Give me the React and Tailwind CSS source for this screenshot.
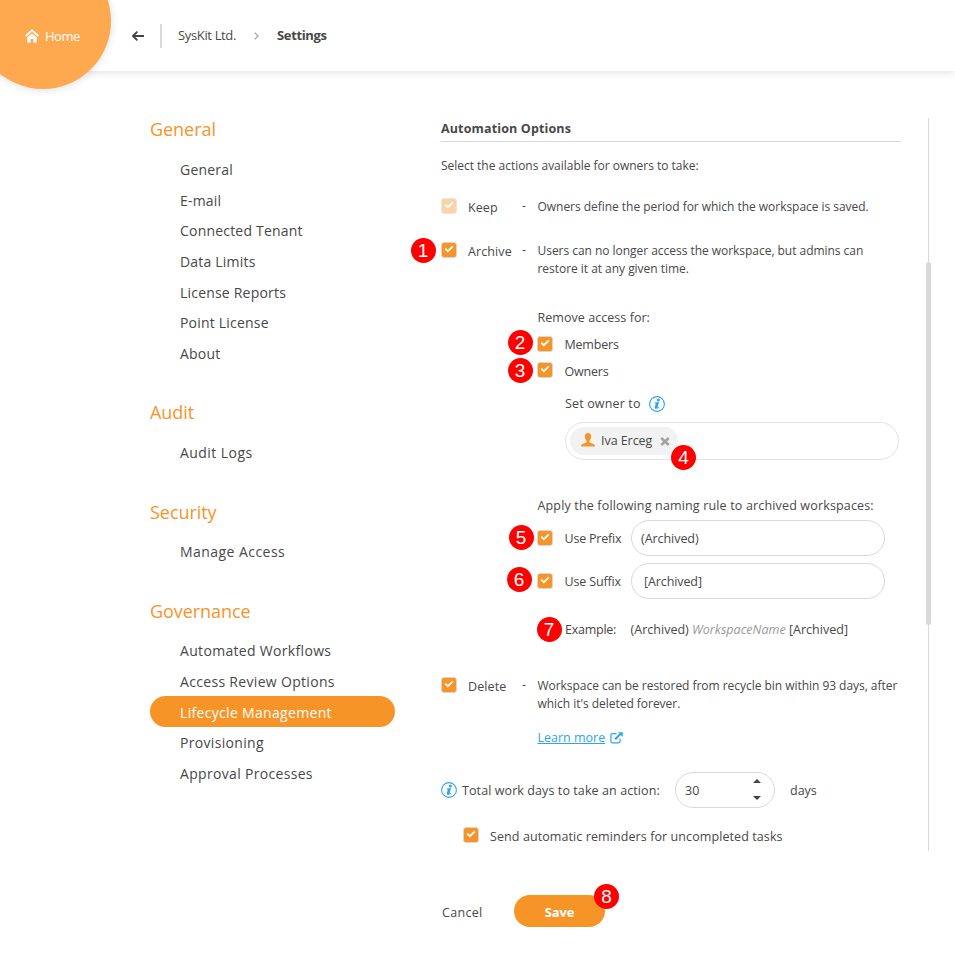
import React from 'react';

function Checkbox({ disabled = false }) {
  return (
    <span
      className={`flex h-4 w-4 shrink-0 items-center justify-center rounded-[3px] border ${
        disabled ? 'border-[#ece6e0] bg-[#fcd3a6]' : 'border-[#dcd5cc] bg-[#f79428]'
      }`}
    >
      <svg className="-mt-[2px]" width="10" height="8" viewBox="0 0 10 8" fill="none" stroke="#fff" strokeWidth="1.8">
        <path d="M1.200 3.600 3.900 6.200 8.800 1.400" />
      </svg>
    </span>
  );
}

function Badge({ n, className }) {
  return (
    <span
      className={`absolute flex h-[25px] w-[25px] items-center justify-center rounded-full bg-[#fe0000] font-['Liberation_Sans',sans-serif] text-[19px] leading-none tracking-normal text-white ${className}`}
    >
      {n}
    </span>
  );
}

function InfoIcon() {
  return (
    <svg className="shrink-0" width="16" height="16" viewBox="0 0 16 16">
      <circle cx="8" cy="8" r="7.4" fill="none" stroke="#2ea3f2" strokeWidth="1.1" />
      <circle cx="9.4" cy="4" r="1.5" fill="#2ea3f2" />
      <path d="M5.500 6.500 10 5.900 8.600 11.200c-.1.500.3.400 1.100-.4l.4.400c-1.800 2.200-5.100 2.200-4.300-.3L6.800 7.500 5.500 7.300Z" fill="#2ea3f2" />
    </svg>
  );
}

const sections = [
  {
    title: 'General',
    heading: 'mb-[10.7px]',
    text: 'tracking-[0.2px]',
    items: ['General', 'E-mail', 'Connected Tenant', 'Data Limits', 'License Reports', 'Point License', 'About'],
  },
  { title: 'Audit', heading: 'mb-[10.7px]', text: 'tracking-[0.45px]', items: ['Audit Logs'] },
  { title: 'Security', heading: 'mb-[10px]', text: 'tracking-[0.45px]', items: ['Manage Access'] },
  {
    title: 'Governance',
    heading: 'mt-[30.6px] mb-[9.6px]',
    text: 'tracking-[0.32px]',
    items: ['Automated Workflows', 'Access Review Options', 'Lifecycle Management', 'Provisioning', 'Approval Processes'],
  },
];

function Header() {
  return (
    <header className="relative flex h-[71px] items-center bg-white pl-[131px] shadow-[0_2px_8px_rgba(0,0,0,0.11)]">
      <div className="absolute -top-[47px] -left-[25px] h-[136px] w-[136px] rounded-full bg-[#fea94f] shadow-[0_1px_8px_rgba(0,0,0,0.13)]" />
      <div className="absolute top-[27px] left-[25px] flex items-center gap-[6px] text-[13px] leading-[18px] tracking-[-0.5px] text-white">
        <svg width="14" height="14" viewBox="0 0 14 14">
          <path d="M.6 7 7 1.400l6.400 5.600" fill="none" stroke="#fff" strokeWidth="1.9" />
          <path d="M2.200 8.600 7 4.400l4.800 4.200v4.200q0 1-1 1H8.400v-3.300q0-.6-.6-.6H6.200q-.6 0-.6.6v3.300H3.200q-1 0-1-1Z" fill="#fff" />
        </svg>
        <span>Home</span>
      </div>
      <svg width="14" height="12" viewBox="0 0 14 12" fill="none" stroke="#444" strokeWidth="1.8">
        <path d="M13 6H2M6.300 1.600 1.900 6l4.400 4.400" />
      </svg>
      <span className="ml-[15px] h-6 w-[2px] bg-[#d9d9d9]" />
      <span className="ml-4 w-[76px] text-[13px] tracking-[-0.35px]">SysKit Ltd.</span>
      <svg width="5" height="8" viewBox="0 0 5 8" fill="none" stroke="#aaa" strokeWidth="1.4">
        <path d="M.8.8 4 4 .8 7.200" />
      </svg>
      <span className="ml-[18px] text-[13px] font-bold tracking-[-0.35px]">Settings</span>
    </header>
  );
}

function Sidebar() {
  return (
    <nav className="w-[245px] shrink-0 pt-[44px]">
      {sections.map(({ title, heading, text, items }) => (
        <section key={title} className="mb-[29.9px]">
          <h2 className={`h-7 text-[18px] leading-7 tracking-[-0.05px] text-[#f79428] ${heading}`}>{title}</h2>
          {items.map((item) => (
            <div
              key={item}
              className={`flex h-[30.7px] items-center rounded-full pl-[30px] text-[14px] leading-5 ${text} ${
                item === 'Lifecycle Management' ? 'bg-[#f79428] pt-[3px] text-white' : 'pt-[2px]'
              }`}
            >
              {item}
            </div>
          ))}
        </section>
      ))}
    </nav>
  );
}

function Action({ label, disabled, children, className }) {
  return (
    <div className={`flex items-start ${className}`}>
      <Checkbox disabled={disabled} />
      <span className="ml-[11px] mt-px w-[54px] tracking-[0.1px]">{label}</span>
      <span className="-mt-px w-[15.5px]">-</span>
      <div className="flex-1 whitespace-nowrap text-[12px] tracking-[-0.035px]">{children}</div>
    </div>
  );
}

function Panel() {
  return (
    <main className="ml-[46px] w-[460px] shrink-0 pt-[47px] text-[12.5px] leading-[18px]">
      <div className="flex h-[733px] flex-col">
        <h1 className="mb-[15px] h-6 shrink-0 border-b border-[#d9d9d9] pt-[2px] text-[12.5px] leading-[18px] font-bold tracking-[0.14px]">
          Automation Options
        </h1>
        <p className="mb-[23px] text-[12px] tracking-[-0.02px]">Select the actions available for owners to take:</p>
        <Action label="Keep" disabled className="mb-[26px] h-[18px]">
          Owners define the period for which the workspace is saved.
        </Action>
        <Action label="Archive" className="relative mb-[31px] h-9">
          Users can no longer access the workspace, but admins can
          <br />
          restore it at any given time.
          <Badge n="1" className="top-[-4px] -left-[30.5px]" />
        </Action>

        <div className="ml-[96px] w-[364px]">
          <p className="mb-[9px] pl-[0.5px] tracking-[0.05px]">Remove access for:</p>
          <div className="relative mb-[9px] flex h-[18px] items-start gap-[11.5px]">
            <Checkbox />
            <span className="tracking-[-0.2px]">Members</span>
            <Badge n="2" className="-top-[6.5px] -left-[29.5px]" />
          </div>
          <div className="relative mb-[14px] flex h-[18px] items-start gap-[11.5px]">
            <div className="-mt-px">
              <Checkbox />
            </div>
            <span className="tracking-[-0.2px]">Owners</span>
            <Badge n="3" className="-top-[5.5px] -left-[29.5px]" />
          </div>
          <div className="mb-[9px] flex h-[18px] items-center gap-2 pl-7">
            <span className="tracking-[0.15px]">Set owner to</span>
            <InfoIcon />
          </div>
          <div className="relative ml-7 mb-[37px] flex h-[38px] w-[334px] items-center rounded-[19px] border border-[#e4e4e4] pl-[4px]">
            <div className="flex h-7 w-[108px] items-center rounded-full bg-[#f2f2f2] pl-[11px]">
              <svg className="-mt-[3px]" width="14" height="14" viewBox="0 0 14 14" fill="#f79428">
                <path d="M7 0C5 0 3.700 1.400 3.800 3.600c.1 1.900.9 3.300 1.700 4.200v1.500C5.400 10.200 2.300 10.400.9 11.300.3 11.800 0 12.500 0 13.500h14c0-1-.3-1.700-.9-2.200-1.400-.9-4.500-1.100-4.600-2V7.800c.8-.9 1.600-2.300 1.700-4.200C10.300 1.400 9 0 7 0Z" />
              </svg>
              <span className="ml-[6px] w-[59px] pb-px text-[12.5px] tracking-[-0.05px]">Iva Erceg</span>
              <svg width="10" height="9" viewBox="0 0 10 9" stroke="#a3a3a3" strokeWidth="2.600">
                <path d="m1.200 1 7.600 7m0-7L1.200 8" />
              </svg>
            </div>
            <Badge n="4" className="top-[22px] left-[105px]" />
          </div>
          <p className="mb-[5px] whitespace-nowrap pl-[0.5px] tracking-[0.16px]">Apply the following naming rule to archived workspaces:</p>
          <div className="relative mb-[7px] flex h-9 items-center">
            <Checkbox />
            <span className="ml-[11.5px] w-[66.5px] pt-[2px] tracking-[-0.2px]">Use Prefix</span>
            <span className="flex h-9 w-[254px] items-center rounded-[18px] border border-[#d9d9d9] pt-[2px] pl-[9px] tracking-[-0.05px]">(Archived)</span>
            <Badge n="5" className="top-[5px] -left-[28.5px]" />
          </div>
          <div className="relative mb-[22px] flex h-9 items-center">
            <Checkbox />
            <span className="ml-[11.5px] w-[66.5px] pt-[2px] tracking-[-0.15px]">Use Suffix</span>
            <span className="flex h-9 w-[254px] items-center rounded-[18px] border border-[#d9d9d9] pt-[2px] pl-[12px] tracking-[-0.1px]">[Archived]</span>
            <Badge n="6" className="top-[4px] -left-[30.5px]" />
          </div>
          <div className="relative mb-[38px] flex h-[18px] pl-[28px]">
            <span className="w-[65.5px] tracking-[-0.25px]">Example:</span>
            <span className="whitespace-nowrap tracking-[0.02px]">
              (Archived) <i className="text-[#999]">WorkspaceName</i> [Archived]
            </span>
            <Badge n="7" className="-top-[4px] -left-[0.5px]" />
          </div>
        </div>

        <Action label="Delete" className="mb-4 h-9">
          Workspace can be restored from recycle bin within 93 days, after
          <br />
          which it's deleted forever.
        </Action>
        <a className="mb-[25px] ml-[96.5px] flex h-[18px] items-center gap-[5px] text-[#2ea3f2]">
          <span className="underline">Learn more</span>
          <svg width="13" height="12" viewBox="0 0 13 12" fill="none" stroke="#2ea3f2" strokeWidth="1.200">
            <path d="M6.500 1.600H2.400Q.9 1.600.9 3.100v6.200q0 1.500 1.500 1.500h6.200q1.500 0 1.500-1.500V6.600" />
            <path d="m5.200 7.200 5-5" strokeWidth="2" />
            <path d="M8 .3h4.700V5Z" fill="#2ea3f2" stroke="none" />
          </svg>
        </a>
        <div className="mb-[19px] flex h-9 items-center">
          <InfoIcon />
          <span className="ml-[5px] w-[213px] whitespace-nowrap pt-px tracking-[0.09px]">Total work days to take an action:</span>
          <span className="flex h-9 w-[100px] items-center justify-between rounded-[18px] border border-[#d9d9d9] pr-[13px] pl-[9px]">
            <span className="pt-px">30</span>
            <svg className="-mt-[2px]" width="8" height="21" viewBox="0 0 8 21" fill="#444">
              <path d="M0 4h8L4 0ZM0 17h8l-4 4Z" />
            </svg>
          </span>
          <span className="ml-[15px] pt-px">days</span>
        </div>
        <div className="ml-[22px] flex h-[18px] items-start gap-[11px]">
          <Checkbox />
          <span className="whitespace-nowrap pt-px tracking-[0.09px]">Send automatic reminders for uncompleted tasks</span>
        </div>
      </div>
      <div className="relative mt-[44px] flex h-8 items-center">
        <span className="w-[73px] pt-[3px] pl-px tracking-[0.3px]">Cancel</span>
        <button className="h-8 w-[91px] rounded-full bg-[#f79428] pt-[2px] text-[13px] font-bold tracking-[-0.1px] text-white">Save</button>
        <Badge n="8" className="-top-[11px] left-[153px]" />
      </div>
    </main>
  );
}

export default function App() {
  return (
    <div className="h-[960px] w-[955px] overflow-hidden bg-white font-['Open_Sans',sans-serif] text-[#484848]">
      <Header />
      <div className="flex pl-[150px]">
        <Sidebar />
        <Panel />
        <div className="mt-[47px] ml-[25px] flex h-[733px] w-[5px] flex-col items-center">
          <div className="h-[144px] w-px bg-[#d9d9d9]" />
          <div className="h-[363px] w-[5px] rounded-full bg-[#d9d9d9]" />
          <div className="w-px flex-1 bg-[#d9d9d9]" />
        </div>
      </div>
    </div>
  );
}
